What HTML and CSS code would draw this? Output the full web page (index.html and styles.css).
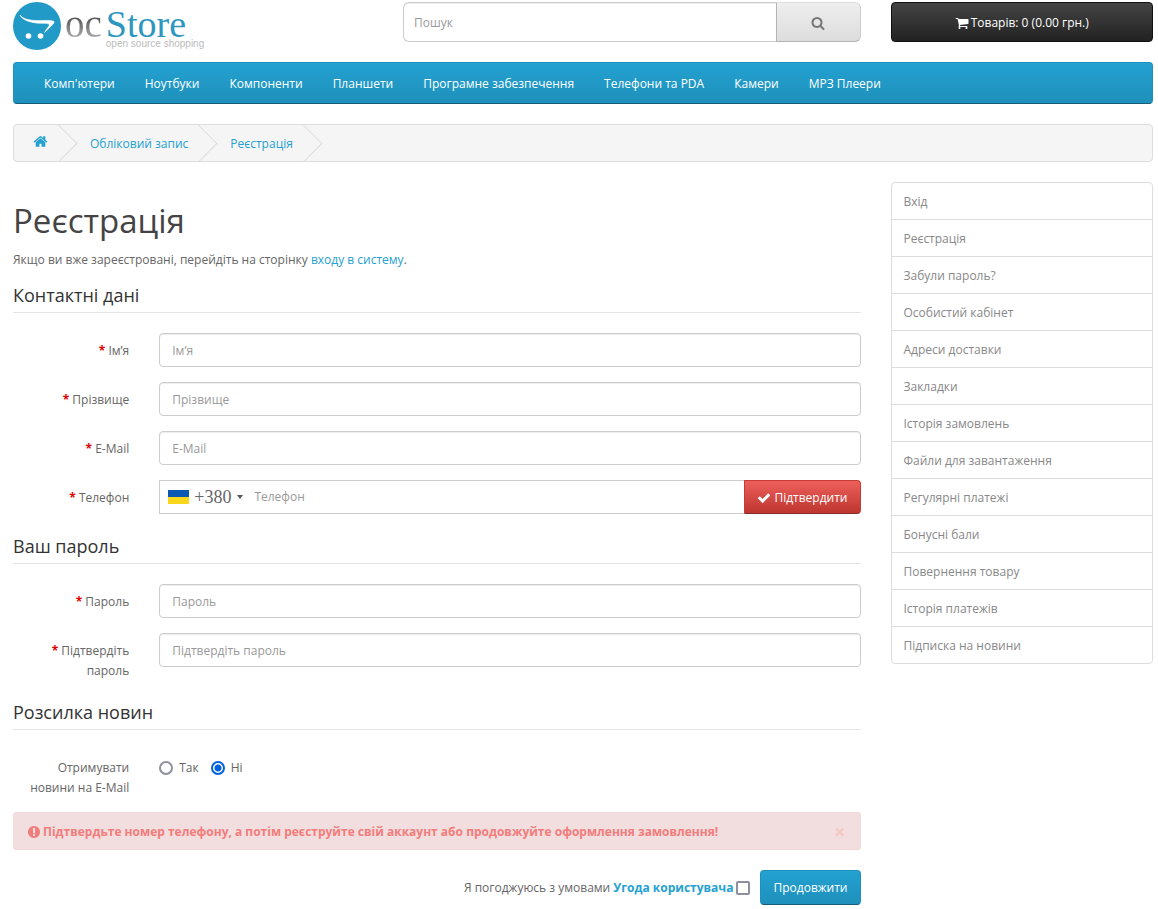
FILE: index.html
```html
<!DOCTYPE html>
<html lang="uk">
<head>
<meta charset="utf-8">
<meta name="viewport" content="width=device-width, initial-scale=1">
<title>Реєстрація</title>
<link rel="stylesheet" href="styles.css">
</head>
<body>
<svg class="sprite" aria-hidden="true">
  <symbol id="i-search" viewBox="0 0 1792 1792"><path d="M1216 832q0-185-131.500-316.500t-316.500-131.500-316.500 131.500-131.500 316.500 131.500 316.500 316.500 131.500 316.500-131.500 131.500-316.500zm512 832q0 52-38 90t-90 38q-54 0-90-38l-343-342q-179 124-399 124-143 0-273.500-55.500t-225-150-150-225-55.500-273.500 55.500-273.500 150-225 225-150 273.500-55.500 273.500 55.500 225 150 150 225 55.500 273.500q0 220-124 399l343 343q37 37 37 90z"/></symbol>
  <symbol id="i-cart" viewBox="0 0 1792 1792"><path d="M704 1536q0 52-38 90t-90 38-90-38-38-90 38-90 90-38 90 38 38 90zm896 0q0 52-38 90t-90 38-90-38-38-90 38-90 90-38 90 38 38 90zm128-1088v512q0 24-16.500 42.500t-40.500 21.500l-1044 122q13 60 13 70 0 16-24 64h920q26 0 45 19t19 45-19 45-45 19h-1024q-26 0-45-19t-19-45q0-11 8-31.500t16-36 21.500-40 15.500-29.500l-177-823h-204q-26 0-45-19t-19-45 19-45 45-19h256q16 0 28.500 6.500t19.500 15.500 13 24.500 8 26 5.500 29.500 4.500 26h1201q26 0 45 19t19 45z"/></symbol>
  <symbol id="i-home" viewBox="0 0 1792 1792"><path d="M1472 992v480q0 26-19 45t-45 19h-384v-384h-256v384h-384q-26 0-45-19t-19-45v-480q0-1 .5-3t.5-3l575-474 575 474q1 2 1 6zm223-69l-62 74q-8 9-21 11h-3q-13 0-21-7l-692-577-692 577q-12 8-24 7-13-2-21-11l-62-74q-8-10-7-23.500t11-21.500l719-599q32-26 76-26t76 26l244 204v-195q0-14 9-23t23-9h192q14 0 23 9t9 23v408l219 182q10 8 11 21.500t-7 23.500z"/></symbol>
  <symbol id="i-check" viewBox="0 0 1792 1792"><path d="M1671 566q0 40-28 68l-724 724-136 136q-28 28-68 28t-68-28l-136-136-362-362q-28-28-28-68t28-68l136-136q28-28 68-28t68 28l294 295 656-657q28-28 68-28t68 28l136 136q28 28 28 68z"/></symbol>
  <symbol id="i-alert" viewBox="0 0 1792 1792"><path d="M896 128q209 0 385.500 103t279.500 279.500 103 385.500-103 385.500-279.500 279.500-385.500 103-385.500-103-279.500-279.500-103-385.500 103-385.500 279.500-279.500 385.500-103zm128 1247v-190q0-14-9-23.500t-22-9.500h-192q-13 0-23 10t-10 23v190q0 13 10 23t23 10h192q13 0 22-9.500t9-23.500zm-2-344l18-621q0-12-10-18-10-8-24-8h-220q-14 0-24 8-10 6-10 18l17 621q0 10 10 17.500t24 7.500h185q14 0 23.500-7.500t10.500-17.500z"/></symbol>
</svg>

<div class="container">
  <header class="grid header">
    <a class="logo" href="#" aria-label="ocStore">
      <svg class="logo-mark" viewBox="0 0 48 48" aria-hidden="true">
        <circle cx="24" cy="24" r="24" fill="#229ac8"/>
        <path d="M7 13C10 17 15 18 22 18.500C31 19 37 17.500 41 19.500C42 21 37 25 31.500 30.500C34 26 37.500 23 36 22C32 20.500 27 22 20 20.500C13 19 8.500 16.500 7 13Z" fill="#fff" stroke="#fff" stroke-width=".6" stroke-linejoin="round"/>
        <circle cx="15.500" cy="34" r="2.800" fill="#fff"/>
        <circle cx="27.500" cy="34" r="2.800" fill="#fff"/>
      </svg>
      <span class="logo-oc">oc</span>
      <span class="logo-name"><span class="logo-store">Store</span><span class="logo-tag">open source shopping</span></span>
    </a>
    <form class="search" role="search">
      <input class="search-input" type="text" placeholder="Пошук" aria-label="Пошук">
      <button class="search-btn" type="button" aria-label="Шукати"><svg class="icon icon-lg"><use href="#i-search"/></svg></button>
    </form>
    <button class="cart" type="button"><svg class="icon icon-lg"><use href="#i-cart"/></svg>Товарів: 0 (0.00 грн.)</button>
  </header>

  <nav class="menu">
    <a href="#">Комп'ютери</a>
    <a href="#">Ноутбуки</a>
    <a href="#">Компоненти</a>
    <a href="#">Планшети</a>
    <a href="#">Програмне забезпечення</a>
    <a href="#">Телефони та PDA</a>
    <a href="#">Камери</a>
    <a href="#">МРЗ Плеери</a>
  </nav>

  <ul class="breadcrumb">
    <li><a href="#" aria-label="Головна"><svg class="icon icon-home"><use href="#i-home"/></svg></a></li>
    <li><a href="#">Обліковий запис</a></li>
    <li><a href="#">Реєстрація</a></li>
  </ul>

  <div class="grid">
    <main class="content">
      <h1>Реєстрація</h1>
      <p class="intro">Якщо ви вже зареєстровані, перейдіть на сторінку <a href="#">входу в систему</a>.</p>
      <form>
        <h2>Контактні дані</h2>
        <div class="group">
          <label class="required" for="firstname">Ім’я</label>
          <input class="field" id="firstname" type="text" placeholder="Ім’я">
        </div>
        <div class="group">
          <label class="required" for="lastname">Прізвище</label>
          <input class="field" id="lastname" type="text" placeholder="Прізвище">
        </div>
        <div class="group">
          <label class="required" for="email">E-Mail</label>
          <input class="field" id="email" type="email" placeholder="E-Mail">
        </div>
        <div class="group">
          <label class="required" for="phone">Телефон</label>
          <div class="phone">
            <button class="country" type="button"><span class="flag"></span>+380<span class="caret"></span></button>
            <input class="phone-input" id="phone" type="tel" placeholder="Телефон">
            <button class="confirm" type="button"><svg class="icon icon-lg"><use href="#i-check"/></svg>Підтвердити</button>
          </div>
        </div>

        <h2>Ваш пароль</h2>
        <div class="group">
          <label class="required" for="password">Пароль</label>
          <input class="field" id="password" type="password" placeholder="Пароль">
        </div>
        <div class="group">
          <label class="required" for="confirm">Підтвердіть пароль</label>
          <input class="field" id="confirm" type="password" placeholder="Підтвердіть пароль">
        </div>

        <h2>Розсилка новин</h2>
        <div class="group" role="radiogroup" aria-labelledby="news">
          <span class="label" id="news">Отримувати новини на E-Mail</span>
          <div class="radios">
            <label><input type="radio" name="newsletter">Так</label>
            <label><input type="radio" name="newsletter" checked>Ні</label>
          </div>
        </div>

        <div class="alert" role="alert">
          <svg class="icon icon-lg"><use href="#i-alert"/></svg>
          <span class="alert-text">Підтвердьте номер телефону, а потім реєструйте свій аккаунт або продовжуйте оформлення замовлення!</span>
          <button class="close" type="button" aria-label="Закрити">×</button>
        </div>

        <div class="actions">
          <label for="agree">Я погоджуюсь з умовами <a href="#">Угода користувача</a></label>
          <input id="agree" type="checkbox">
          <button class="submit" type="button">Продовжити</button>
        </div>
      </form>
    </main>

    <aside class="side">
      <a href="#">Вхід</a>
      <a href="#">Реєстрація</a>
      <a href="#">Забули пароль?</a>
      <a href="#">Особистий кабінет</a>
      <a href="#">Адреси доставки</a>
      <a href="#">Закладки</a>
      <a href="#">Історія замовлень</a>
      <a href="#">Файли для завантаження</a>
      <a href="#">Регулярні платежі</a>
      <a href="#">Бонусні бали</a>
      <a href="#">Повернення товару</a>
      <a href="#">Історія платежів</a>
      <a href="#">Підписка на новини</a>
    </aside>
  </div>
</div>
</body>
</html>
```

FILE: styles.css
```css
* { box-sizing: border-box; }

body {
  margin: 0;
  background: #fff;
  color: #666;
  font: 12px/20px "Open Sans", "Noto Sans", sans-serif;
}

a { color: #23a1d1; text-decoration: none; }

button, input { font: inherit; color: inherit; margin: 0; }

button { cursor: pointer; }

::placeholder { color: #999; opacity: 1; }

.sprite { display: none; }

.icon { width: 13px; height: 13px; fill: currentColor; flex: none; }
.icon-lg { width: 14px; height: 14px; }
.icon-home { width: 15px; height: 15px; }

.container { padding: 2px 5px 4px 13px; }

.grid {
  display: grid;
  grid-template-columns: repeat(12, minmax(0, 1fr));
  column-gap: 30px;
  align-items: start;
}

/* Header */
.header { height: 40px; margin-bottom: 20px; }

.logo {
  grid-column: span 4;
  display: flex;
  align-items: flex-start;
  font-family: "Liberation Serif", serif;
}
.logo-mark { width: 48px; height: 48px; flex: none; margin-right: 4px; }
.logo-oc {
  margin-right: 4px;
  font-size: 39px;
  line-height: 44px;
  background: linear-gradient(#555 35%, #aaa 80%);
  background-clip: text;
  color: transparent;
}
.logo-name { display: flex; flex-direction: column; }
.logo-store { color: #2d97c0; font-size: 38px; line-height: 44px; }
.logo-tag {
  margin-top: -8px;
  color: #bbb;
  font: 10px/12px "Liberation Sans", sans-serif;
}

.search { grid-column: span 5; display: flex; height: 40px; }
.search-input {
  flex: 1;
  min-width: 0;
  padding: 1px 10px 0;
  border: 1px solid #ccc;
  border-right: 0;
  border-radius: 6px 0 0 6px;
  box-shadow: inset 0 1px 1px rgba(0, 0, 0, .075);
}
.search-btn {
  display: flex;
  align-items: center;
  justify-content: center;
  width: 85px;
  padding: 2px 0 0;
  border: 1px solid #ccc;
  border-color: #ddd #ccc #b3b3b3 #b3b3b3;
  border-radius: 0 6px 6px 0;
  background: linear-gradient(#eee, #ddd);
  color: #777;
}

.cart {
  grid-column: span 3;
  display: flex;
  align-items: center;
  justify-content: center;
  gap: 2px;
  height: 40px;
  padding: 2px 0 0;
  border: 1px solid #111;
  border-radius: 4px;
  background: linear-gradient(#444, #222);
  color: #fff;
}

/* Main menu */
.menu {
  display: flex;
  flex-wrap: wrap;
  margin-bottom: 20px;
  padding: 0 15px;
  border: 1px solid #1f90bb;
  border-bottom-color: #145e7a;
  border-radius: 4px;
  background: linear-gradient(#23a1d1, #1f90bb);
}
.menu a { padding: 11px 15px 9px; color: #fff; }

/* Breadcrumb */
.breadcrumb {
  display: flex;
  gap: 4px;
  overflow: hidden;
  margin: 0 0 20px;
  padding: 0;
  list-style: none;
  border: 1px solid #ddd;
  border-radius: 4px;
  background: #f5f5f5;
}
.breadcrumb li { position: relative; padding: 9px 19px 7px; }
.breadcrumb a { display: block; height: 20px; }
.breadcrumb .icon { display: block; }
.breadcrumb li::after {
  content: "";
  position: absolute;
  top: 5px;
  right: -5px;
  width: 26px;
  height: 26px;
  border-right: 1px solid #ddd;
  border-bottom: 1px solid #ddd;
  transform: rotate(-45deg);
}

/* Registration form */
.content { grid-column: span 9; }

h1 {
  margin: 20px 0 10px;
  color: #444;
  font-size: 33px;
  font-weight: 400;
  line-height: 38px;
}
.intro { margin: 0 0 8px; }

h2 {
  margin: 0 0 20px;
  padding: 7px 0;
  border-bottom: 1px solid #e5e5e5;
  color: #333;
  font-size: 18px;
  font-weight: 400;
  line-height: 20px;
}

.group {
  display: grid;
  grid-template-columns: repeat(12, minmax(0, 1fr));
  column-gap: 30px;
  align-items: start;
  margin-bottom: 15px;
}
.group > label, .label {
  grid-column: span 2;
  margin-bottom: -1px;
  padding-top: 8px;
  text-align: right;
}
.required::before { content: "* "; color: #d00; font-weight: 700; }

.field {
  grid-column: span 10;
  width: 100%;
  height: 34px;
  padding: 0 12px;
  border: 1px solid #ccc;
  border-radius: 4px;
  box-shadow: inset 0 1px 1px rgba(0, 0, 0, .075);
}

.phone { grid-column: span 10; display: flex; height: 34px; }
.country {
  display: flex;
  align-items: center;
  padding: 0 6px 0 8px;
  border: 1px solid #ccc;
  border-right: 0;
  background: #fff;
  font: 18px/20px "Liberation Serif", serif;
}
.flag {
  width: 21px;
  height: 14px;
  margin-right: 5px;
  background: linear-gradient(#0a5ab4 50%, #f8d71c 50%);
}
.caret {
  margin-left: 6px;
  border: 3px solid transparent;
  border-top: 4px solid #555;
  border-bottom: 0;
}
.phone-input {
  flex: 1;
  min-width: 0;
  padding: 0 5px;
  border: 1px solid #ccc;
  border-width: 1px 0;
}
.confirm {
  display: flex;
  align-items: center;
  gap: 3px;
  padding: 2px 12px 0;
  border: 1px solid #c43c35;
  border-bottom-color: #882a25;
  border-radius: 0 4px 4px 0;
  background: linear-gradient(#ee5f5b, #bd362f);
  color: #fff;
}

.radios { grid-column: span 10; display: flex; gap: 12px; padding-top: 8px; }
.radios label { display: flex; align-items: center; gap: 6px; }
input[type="radio"] {
  appearance: none;
  width: 14px;
  height: 14px;
  border: 2px solid #8f8f9d;
  border-radius: 50%;
  background: #fff;
}
input[type="radio"]:checked {
  border-color: #0060df;
  background: radial-gradient(circle, #0060df 3px, #fff 4px);
}

.alert {
  display: flex;
  align-items: center;
  gap: 2px;
  margin-bottom: 20px;
  padding: 9px 14px 7px 13px;
  border: 1px solid #f3d7da;
  border-radius: 3px;
  background: #f2dede;
  color: #f27c7c;
  font-weight: 700;
}
.alert-text { flex: 1; }
.close {
  height: 20px;
  padding: 0;
  border: 0;
  background: none;
  color: #f6c6c8;
  font-size: 20px;
  line-height: 16px;
}

.actions { display: flex; align-items: center; justify-content: flex-end; }
.actions a { font-weight: 700; }
input[type="checkbox"] {
  appearance: none;
  width: 14px;
  height: 14px;
  margin: 0 10px 0 3px;
  border: 2px solid #8f8f9d;
  border-radius: 2px;
  background: #fff;
}
.submit {
  height: 35px;
  padding: 1px 12px 0;
  border: 1px solid #1f90bb;
  border-bottom-color: #145e7a;
  border-radius: 4px;
  background: linear-gradient(#23a1d1, #1f90bb);
  color: #fff;
}

/* Account links */
.side {
  grid-column: span 3;
  border: 1px solid #ddd;
  border-radius: 4px;
}
.side a { display: block; padding: 9px 12px 7px; color: #888; }
.side a + a { border-top: 1px solid #ddd; }
```
